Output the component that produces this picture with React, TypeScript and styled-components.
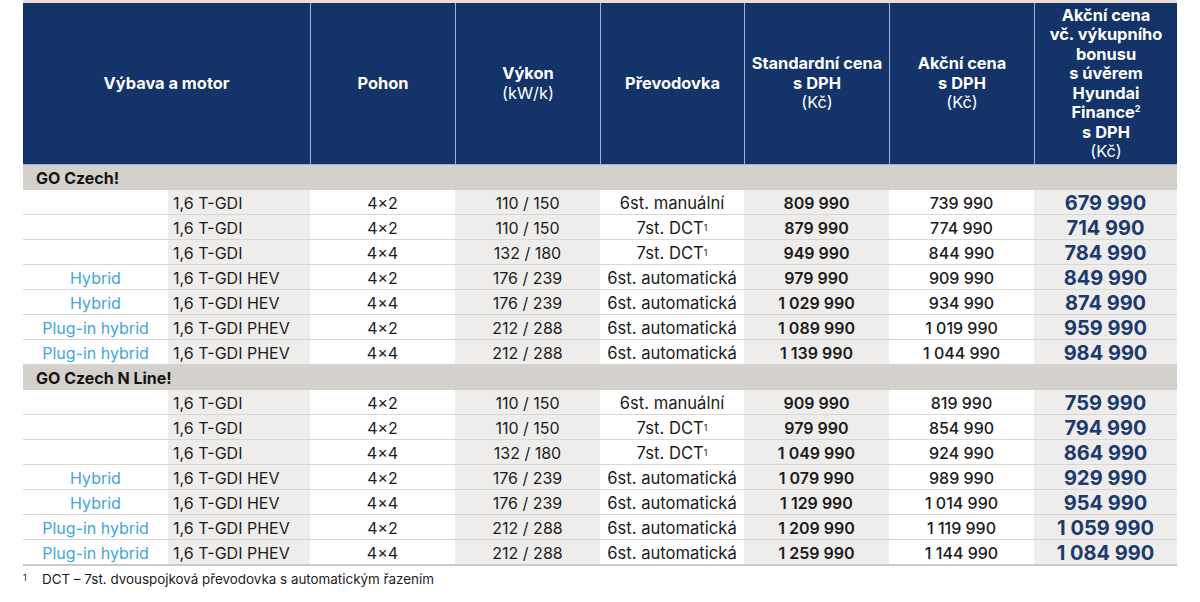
import React from 'react';
import styled, { createGlobalStyle } from 'styled-components';

const GlobalStyle = createGlobalStyle`
  *, *::before, *::after {
    box-sizing: border-box;
  }
  body {
    margin: 0;
    background: #ffffff;
    font-family: Inter, 'Noto Sans', 'Liberation Sans', sans-serif;
    color: #1b1b1b;
  }
`;

const navy = '#133369';
const cols = '145px 142px 145px 145px 144px 145px 145px 143px';

const Page = styled.div`
  width: 1177px;
  padding-left: 23px;
`;

const TopStrip = styled.div`
  height: 3px;
  background: #e7dcd4;
`;

const HeaderRow = styled.div`
  display: grid;
  grid-template-columns: 287px 145px 145px 144px 145px 145px 143px;
  height: 162px;
  background: ${navy};
  border-bottom: 1px solid #9db4d5;
`;

const HeaderCell = styled.div`
  display: flex;
  flex-direction: column;
  align-items: center;
  justify-content: center;
  text-align: center;
  color: #ffffff;
  font-size: 16.4px;
  font-weight: 700;
  line-height: 19.5px;
  & + & {
    border-left: 1px solid #9db4d5;
  }
`;

const HeaderSub = styled.span`
  font-weight: 400;
`;

const Sup = styled.sup`
  font-size: 9px;
  line-height: 0;
  vertical-align: 6px;
`;

const SectionRow = styled.div`
  height: 25px;
  display: flex;
  align-items: center;
  padding: 1px 0 0 13px;
  background: #d4d0cc;
  font-size: 16px;
  font-weight: 700;
  color: #141414;
`;

const DataRow = styled.div<{ $last?: boolean }>`
  display: grid;
  grid-template-columns: ${cols};
  height: ${(p) => (p.$last ? '26px' : '25px')};
  border-bottom: ${(p) => (p.$last ? '2px solid #cbc8c5' : '1px solid #d9d7d4')};
`;

const Cell = styled.div<{
  $shade?: boolean;
  $align?: 'left' | 'center';
  $weight?: number;
}>`
  display: flex;
  align-items: center;
  justify-content: ${(p) => (p.$align === 'left' ? 'flex-start' : 'center')};
  padding-left: ${(p) => (p.$align === 'left' ? '5px' : '0')};
  padding-top: 1px;
  min-height: 0;
  overflow: hidden;
  background: ${(p) => (p.$shade ? '#efedeb' : '#ffffff')};
  font-size: 16px;
  line-height: 20px;
  font-weight: ${(p) => p.$weight ?? 400};
  white-space: nowrap;
`;

const TrimCell = styled(Cell)`
  color: #42a6d6;
`;

const GearCell = styled(Cell)`
  font-size: 16.6px;
`;

const BonusCell = styled(Cell)`
  font-size: 20px;
  font-weight: 700;
  color: #1b3a6f;
`;

const Footnote = styled.div`
  display: flex;
  align-items: flex-start;
  margin-top: 5px;
  font-size: 13.4px;
  color: #1b1b1b;
`;

const FootMark = styled.span`
  width: 19px;
  font-size: 9px;
  line-height: 14px;
`;

type Car = {
  trim: string;
  motor: string;
  drive: string;
  power: string;
  gear: string;
  dct?: boolean;
  std: string;
  promo: string;
  bonus: string;
};

const base: Omit<Car, 'std' | 'promo' | 'bonus'>[] = [
  { trim: '', motor: '1,6 T-GDI', drive: '4×2', power: '110 / 150', gear: '6st. manuální' },
  { trim: '', motor: '1,6 T-GDI', drive: '4×2', power: '110 / 150', gear: '7st. DCT', dct: true },
  { trim: '', motor: '1,6 T-GDI', drive: '4×4', power: '132 / 180', gear: '7st. DCT', dct: true },
  { trim: 'Hybrid', motor: '1,6 T-GDI HEV', drive: '4×2', power: '176 / 239', gear: '6st. automatická' },
  { trim: 'Hybrid', motor: '1,6 T-GDI HEV', drive: '4×4', power: '176 / 239', gear: '6st. automatická' },
  { trim: 'Plug-in hybrid', motor: '1,6 T-GDI PHEV', drive: '4×2', power: '212 / 288', gear: '6st. automatická' },
  { trim: 'Plug-in hybrid', motor: '1,6 T-GDI PHEV', drive: '4×4', power: '212 / 288', gear: '6st. automatická' },
];

const prices = (list: [string, string, string][]): Car[] =>
  base.map((b, i) => ({ ...b, std: list[i][0], promo: list[i][1], bonus: list[i][2] }));

const sections: { title: string; cars: Car[] }[] = [
  {
    title: 'GO Czech!',
    cars: prices([
      ['809 990', '739 990', '679 990'],
      ['879 990', '774 990', '714 990'],
      ['949 990', '844 990', '784 990'],
      ['979 990', '909 990', '849 990'],
      ['1 029 990', '934 990', '874 990'],
      ['1 089 990', '1 019 990', '959 990'],
      ['1 139 990', '1 044 990', '984 990'],
    ]),
  },
  {
    title: 'GO Czech N Line!',
    cars: prices([
      ['909 990', '819 990', '759 990'],
      ['979 990', '854 990', '794 990'],
      ['1 049 990', '924 990', '864 990'],
      ['1 079 990', '989 990', '929 990'],
      ['1 129 990', '1 014 990', '954 990'],
      ['1 209 990', '1 119 990', '1 059 990'],
      ['1 259 990', '1 144 990', '1 084 990'],
    ]),
  },
];

const App = () => {
  return (
    <Page>
      <GlobalStyle />
      <TopStrip />
      <HeaderRow>
        <HeaderCell>Výbava a motor</HeaderCell>
        <HeaderCell>Pohon</HeaderCell>
        <HeaderCell>
          Výkon
          <HeaderSub>(kW/k)</HeaderSub>
        </HeaderCell>
        <HeaderCell>Převodovka</HeaderCell>
        <HeaderCell>
          Standardní cena
          <span>s DPH</span>
          <HeaderSub>(Kč)</HeaderSub>
        </HeaderCell>
        <HeaderCell>
          Akční cena
          <span>s DPH</span>
          <HeaderSub>(Kč)</HeaderSub>
        </HeaderCell>
        <HeaderCell>
          Akční cena
          <span>vč. výkupního</span>
          <span>bonusu</span>
          <span>s úvěrem</span>
          <span>Hyundai</span>
          <span>
            Finance<Sup>2</Sup>
          </span>
          <span>s DPH</span>
          <HeaderSub>(Kč)</HeaderSub>
        </HeaderCell>
      </HeaderRow>
      {sections.map((section, si) => (
        <React.Fragment key={section.title}>
          <SectionRow>{section.title}</SectionRow>
          {section.cars.map((car, i) => (
            <DataRow
              key={i}
              $last={si === sections.length - 1 && i === section.cars.length - 1}
            >
              <TrimCell>{car.trim}</TrimCell>
              <Cell $shade $align='left'>
                {car.motor}
              </Cell>
              <Cell>{car.drive}</Cell>
              <Cell $shade>{car.power}</Cell>
              <GearCell>
                {car.gear}
                {car.dct && <Sup>1</Sup>}
              </GearCell>
              <Cell $shade $weight={600}>
                {car.std}
              </Cell>
              <Cell $weight={500}>{car.promo}</Cell>
              <BonusCell $shade>{car.bonus}</BonusCell>
            </DataRow>
          ))}
        </React.Fragment>
      ))}
      <Footnote>
        <FootMark>1</FootMark>
        DCT – 7st. dvouspojková převodovka s automatickým řazením
      </Footnote>
    </Page>
  );
};

export default App;
